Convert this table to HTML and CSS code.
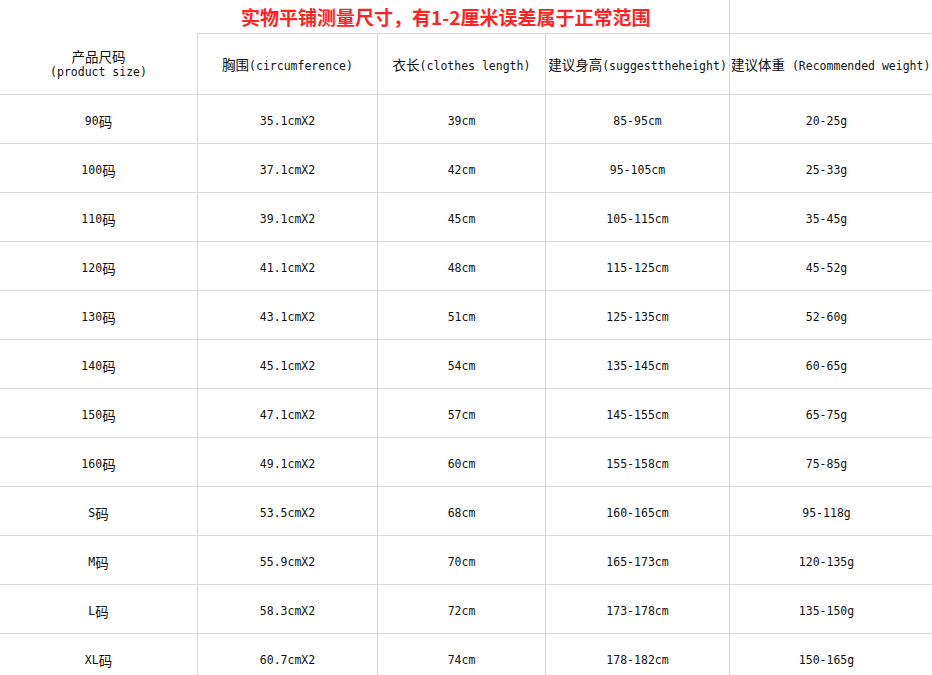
FILE: index.html
```html
<!DOCTYPE html>
<html lang="zh">
<head>
<meta charset="utf-8">
<link rel="stylesheet" href="styles.css">
</head>
<body>
<div class="sheet">
  <div class="row title-row">
    <div class="title-cell">实物平铺测量尺寸，有1-2厘米误差属于正常范围</div>
    <div class="blank"></div>
  </div>
  <div class="row head">
    <div class="cell first"><div class="two"><span class="c">产品尺码</span><span>(product size)</span></div></div>
    <div class="cell top"><span><span class="c">胸围</span>(circumference)</span></div>
    <div class="cell top"><span><span class="c">衣长</span>(clothes length)</span></div>
    <div class="cell top"><span><span class="c">建议身高</span>(suggesttheheight)</span></div>
    <div class="cell top last left"><span><span class="c">建议体重</span> (Recommended weight)</span></div>
  </div>
  <div class="row"><div class="cell">90<span class="c">码</span></div><div class="cell">35.1cmX2</div><div class="cell">39cm</div><div class="cell">85-95cm</div><div class="cell last">20-25g</div></div>
  <div class="row"><div class="cell">100<span class="c">码</span></div><div class="cell">37.1cmX2</div><div class="cell">42cm</div><div class="cell">95-105cm</div><div class="cell last">25-33g</div></div>
  <div class="row"><div class="cell">110<span class="c">码</span></div><div class="cell">39.1cmX2</div><div class="cell">45cm</div><div class="cell">105-115cm</div><div class="cell last">35-45g</div></div>
  <div class="row"><div class="cell">120<span class="c">码</span></div><div class="cell">41.1cmX2</div><div class="cell">48cm</div><div class="cell">115-125cm</div><div class="cell last">45-52g</div></div>
  <div class="row"><div class="cell">130<span class="c">码</span></div><div class="cell">43.1cmX2</div><div class="cell">51cm</div><div class="cell">125-135cm</div><div class="cell last">52-60g</div></div>
  <div class="row"><div class="cell">140<span class="c">码</span></div><div class="cell">45.1cmX2</div><div class="cell">54cm</div><div class="cell">135-145cm</div><div class="cell last">60-65g</div></div>
  <div class="row"><div class="cell">150<span class="c">码</span></div><div class="cell">47.1cmX2</div><div class="cell">57cm</div><div class="cell">145-155cm</div><div class="cell last">65-75g</div></div>
  <div class="row"><div class="cell">160<span class="c">码</span></div><div class="cell">49.1cmX2</div><div class="cell">60cm</div><div class="cell">155-158cm</div><div class="cell last">75-85g</div></div>
  <div class="row"><div class="cell">S<span class="c">码</span></div><div class="cell">53.5cmX2</div><div class="cell">68cm</div><div class="cell">160-165cm</div><div class="cell last">95-118g</div></div>
  <div class="row"><div class="cell">M<span class="c">码</span></div><div class="cell">55.9cmX2</div><div class="cell">70cm</div><div class="cell">165-173cm</div><div class="cell last">120-135g</div></div>
  <div class="row"><div class="cell">L<span class="c">码</span></div><div class="cell">58.3cmX2</div><div class="cell">72cm</div><div class="cell">173-178cm</div><div class="cell last">135-150g</div></div>
  <div class="row"><div class="cell">XL<span class="c">码</span></div><div class="cell">60.7cmX2</div><div class="cell">74cm</div><div class="cell">178-182cm</div><div class="cell last">150-165g</div></div>
</div>
</body>
</html>
```
FILE: styles.css
```css
html, body {
  margin: 0;
  padding: 0;
  background: #fff;
}
body {
  width: 932px;
  height: 675px;
  overflow: hidden;
  font-family: "DejaVu Sans Mono", "Noto Sans CJK SC", monospace;
  font-size: 11.5px;
  color: #111;
}
.sheet {
  width: 932px;
}
.row {
  display: grid;
  grid-template-columns: 198px 180px 168px 184px 202px;
  height: 49px;
  border-bottom: 1px solid #d9d9d9;
  box-sizing: border-box;
}
.c {
  font-family: "Noto Sans CJK SC", sans-serif;
  font-size: 13.5px;
}
.cell {
  box-sizing: border-box;
  border-right: 1px solid #d9d9d9;
  display: flex;
  align-items: center;
  justify-content: center;
  white-space: nowrap;
  padding-top: 3px;
}
.cell.last {
  border-right: none;
  padding-right: 9px;
}
.title-row {
  grid-template-columns: 730px 202px;
  height: 33px;
  border-bottom: none;
}
.title-cell {
  box-sizing: border-box;
  border-right: 1px solid #d9d9d9;
  padding-left: 241px;
  font-family: "Noto Sans CJK SC", sans-serif;
  font-weight: 700;
  font-size: 19px;
  line-height: 33px;
  color: #ff2424;
  white-space: nowrap;
  overflow: visible;
}
.head {
  height: 62px;
}
.head .cell {
  padding-top: 0;
}
.head .cell.top {
  border-top: 1px solid #d9d9d9;
}
.head .cell.first {
  padding-top: 1px;
}
.head .cell.left {
  justify-content: flex-start;
  padding-left: 1px;
  padding-right: 0;
  overflow: visible;
}
.two {
  display: flex;
  flex-direction: column;
  align-items: center;
  line-height: 16px;
}
```
